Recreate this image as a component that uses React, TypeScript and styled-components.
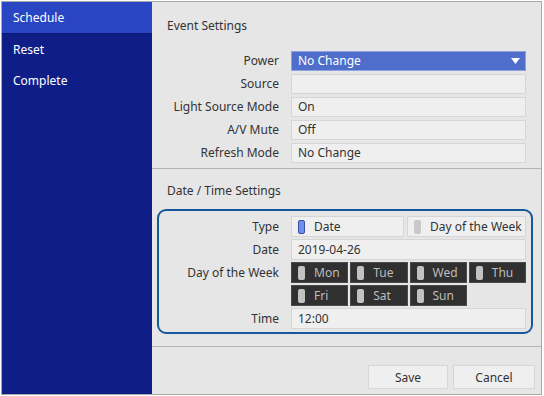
import { createGlobalStyle } from 'styled-components';
import styled from 'styled-components';

const GlobalStyle = createGlobalStyle`
  html, body {
    margin: 0;
    padding: 0;
    background: #ffffff;
  }
  body {
    font-family: 'Noto Sans', 'Open Sans', sans-serif;
    font-size: 12px;
    color: #333333;
  }
`;

const menu = ['Schedule', 'Reset', 'Complete'];

const eventRows = [
  { label: 'Source', value: '' },
  { label: 'Light Source Mode', value: 'On' },
  { label: 'A/V Mute', value: 'Off' },
  { label: 'Refresh Mode', value: 'No Change' },
];

const days = ['Mon', 'Tue', 'Wed', 'Thu', 'Fri', 'Sat', 'Sun'];

export default function App() {
  return (
    <>
      <GlobalStyle />
      <Frame>
        <Sidebar>
          {menu.map((m, i) => (
            <MenuItem key={m} $active={i === 0}>
              {m}
            </MenuItem>
          ))}
        </Sidebar>
        <Main>
          <Section $top={16} $bottom={5}>
            <SectionTitle $gap={17}>Event Settings</SectionTitle>
            <Rows $gap={3}>
              <Row>
                <Label>Power</Label>
                <Select>
                  No Change
                  <Caret viewBox='0 0 9 6'>
                    <path d='M0 0h9L4.5 6z' fill='#ffffff' />
                  </Caret>
                </Select>
              </Row>
              {eventRows.map((r) => (
                <Row key={r.label}>
                  <Label>{r.label}</Label>
                  <Field>{r.value}</Field>
                </Row>
              ))}
            </Rows>
          </Section>
          <Divider />
          <Section $top={14} $bottom={12}>
            <SectionTitle $gap={10}>Date / Time Settings</SectionTitle>
            <Highlight>
              <Rows $gap={2}>
                <Row>
                  <Label $tall>Type</Label>
                  <OptionGrid $cols='113px 1fr' $gap={3}>
                    <Option>
                      <Mark $on />
                      Date
                    </Option>
                    <Option>
                      <Mark />
                      Day of the Week
                    </Option>
                  </OptionGrid>
                </Row>
                <Row>
                  <Label $tall>Date</Label>
                  <Field $tall>2019-04-26</Field>
                </Row>
                <Row>
                  <Label $tall>Day of the Week</Label>
                  <OptionGrid $cols='repeat(4, 1fr)' $gap={2}>
                    {days.map((d) => (
                      <DayButton key={d}>
                        <Mark $dark />
                        {d}
                      </DayButton>
                    ))}
                  </OptionGrid>
                </Row>
                <Row>
                  <Label $tall>Time</Label>
                  <Field $tall>12:00</Field>
                </Row>
              </Rows>
            </Highlight>
          </Section>
          <Divider />
          <Footer>
            <Button>Save</Button>
            <Button $wide>Cancel</Button>
          </Footer>
        </Main>
      </Frame>
    </>
  );
}

const Frame = styled.div`
  display: flex;
  margin: 1px 0 0 1px;
  width: 541px;
  height: 394px;
  box-sizing: border-box;
  border: 1px solid #a9a9a9;
  background: #e6e6e6;
`;

const Sidebar = styled.nav`
  width: 150px;
  flex-shrink: 0;
  background: #0f1e86;
  display: flex;
  flex-direction: column;
`;

const MenuItem = styled.div<{ $active?: boolean }>`
  height: 31px;
  line-height: 31px;
  padding-left: 11px;
  color: #ffffff;
  font-size: 12px;
  background: ${({ $active }) => ($active ? '#2a45c4' : 'transparent')};
  border-bottom: ${({ $active }) => ($active ? '1px solid #0b1770' : 'none')};
`;

const Main = styled.main`
  flex: 1;
  display: flex;
  flex-direction: column;
  background: #e6e6e6;
`;

const Section = styled.section<{ $top: number; $bottom: number }>`
  padding: ${({ $top }) => $top}px 15px ${({ $bottom }) => $bottom}px 15px;
`;

const SectionTitle = styled.h2<{ $gap: number }>`
  margin: 0 0 ${({ $gap }) => $gap}px 0;
  font-size: 12px;
  font-weight: normal;
  line-height: 16px;
  color: #333333;
`;

const Rows = styled.div<{ $gap: number }>`
  display: flex;
  flex-direction: column;
  gap: ${({ $gap }) => $gap}px;
`;

const Row = styled.div`
  display: grid;
  grid-template-columns: 112px 1fr;
  column-gap: 12px;
  align-items: start;
`;

const Label = styled.span<{ $tall?: boolean }>`
  text-align: right;
  line-height: ${({ $tall }) => ($tall ? 21 : 20)}px;
  white-space: nowrap;
  color: #333333;
`;

const Field = styled.div<{ $tall?: boolean }>`
  height: ${({ $tall }) => ($tall ? 21 : 20)}px;
  line-height: ${({ $tall }) => ($tall ? 19 : 18)}px;
  box-sizing: border-box;
  padding: 0 6px;
  background: #efefef;
  border: 1px solid #d6d6d6;
  color: #333333;
`;

const Select = styled(Field)`
  display: flex;
  align-items: center;
  justify-content: space-between;
  padding-right: 5px;
  background: #4f6ecb;
  border-color: #8ea2e0;
  color: #ffffff;
`;

const Caret = styled.svg`
  width: 9px;
  height: 6px;
`;

const Highlight = styled.div`
  margin: 0 -7px 0 -10px;
  padding: 5px 5px 3px 8px;
  border: 2px solid #16589a;
  border-radius: 9px;
`;

const OptionGrid = styled.div<{ $cols: string; $gap: number }>`
  display: grid;
  grid-template-columns: ${({ $cols }) => $cols};
  gap: ${({ $gap }) => $gap}px;
`;

const Option = styled.div`
  height: 21px;
  box-sizing: border-box;
  display: flex;
  align-items: center;
  gap: 9px;
  padding: 0 6px;
  white-space: nowrap;
  overflow: hidden;
  background: #efefef;
  border: 1px solid #d6d6d6;
  color: #333333;
`;

const DayButton = styled(Option)`
  background: #303030;
  border-color: #4a4a4a;
  color: #bdbdbd;
  gap: 9px;
`;

const Mark = styled.span<{ $on?: boolean; $dark?: boolean }>`
  flex-shrink: 0;
  width: 7px;
  height: 14px;
  border-radius: 2px;
  box-sizing: border-box;
  background: ${({ $on, $dark }) => ($on ? '#6f8ff0' : $dark ? '#c2c2c2' : '#c9c9c9')};
  border: 1px solid ${({ $on }) => ($on ? '#3a4fa0' : 'transparent')};
`;

const Divider = styled.hr`
  margin: 0;
  border: none;
  border-top: 1px solid #b4b4b4;
`;

const Footer = styled.div`
  flex: 1;
  display: flex;
  justify-content: flex-end;
  align-items: flex-end;
  gap: 5px;
  padding: 0 6px 5px 0;
`;

const Button = styled.button<{ $wide?: boolean }>`
  width: ${({ $wide }) => ($wide ? 82 : 80)}px;
  height: 24px;
  font-family: inherit;
  font-size: 12px;
  color: #333333;
  background: #efefef;
  border: 1px solid #d6d6d6;
  padding: 0;
`;
